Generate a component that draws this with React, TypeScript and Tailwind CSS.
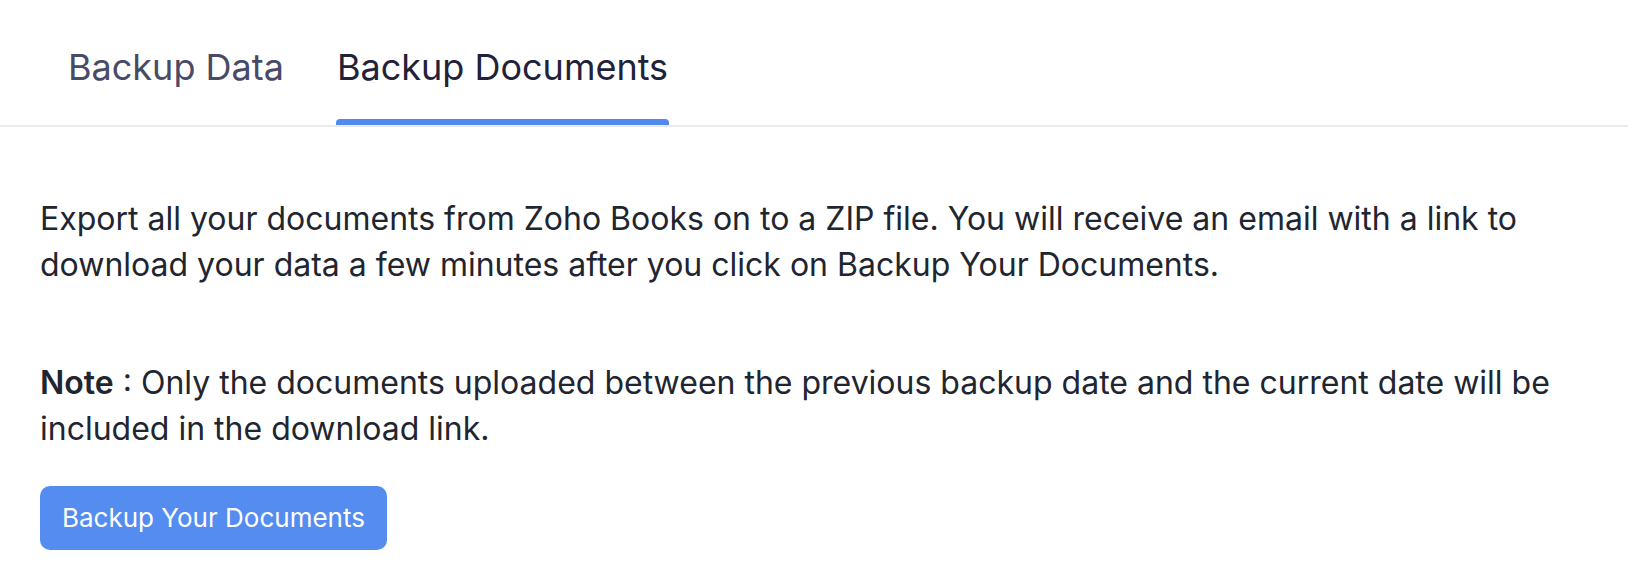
export default function App() {
  return (
    <div className="w-[1628px] h-[580px] bg-white overflow-hidden" style={{ fontFamily: 'Inter, "Noto Sans", sans-serif' }}>
      <div className="flex items-stretch h-[127px] border-b-2 border-[#ebebeb] pl-[68px] gap-[53px]">
        <div className="flex flex-col justify-between">
          <div className="pt-[45px] text-[36px] leading-[44px] text-[#474b66]">Backup Data</div>
          <div className="h-[6px]" />
        </div>
        <div className="flex flex-col justify-between">
          <div className="pt-[45px] text-[36px] leading-[44px] text-[#1f2238]">Backup Documents</div>
          <div className="h-[6px] bg-[#5189f0] rounded-t-[4px] -mx-[1px]" />
        </div>
      </div>
      <div className="pl-[40px] pr-[40px] text-[32px] leading-[46px] text-[#21252f]">
        <p className="mt-[69px]">
          Export all your documents from Zoho Books on to a ZIP file. You will receive an email with a link to download your data a few minutes after you click on Backup Your Documents.
        </p>
        <p className="mt-[72px]">
          <span className="font-semibold">Note</span> : Only the documents uploaded between the previous backup date and the current date will be included in the download link.
        </p>
        <button className="mt-[34px] h-[64px] px-[22px] rounded-[10px] bg-[#548cf0] text-white text-[26px] leading-[32px]">
          Backup Your Documents
        </button>
      </div>
    </div>
  );
}
